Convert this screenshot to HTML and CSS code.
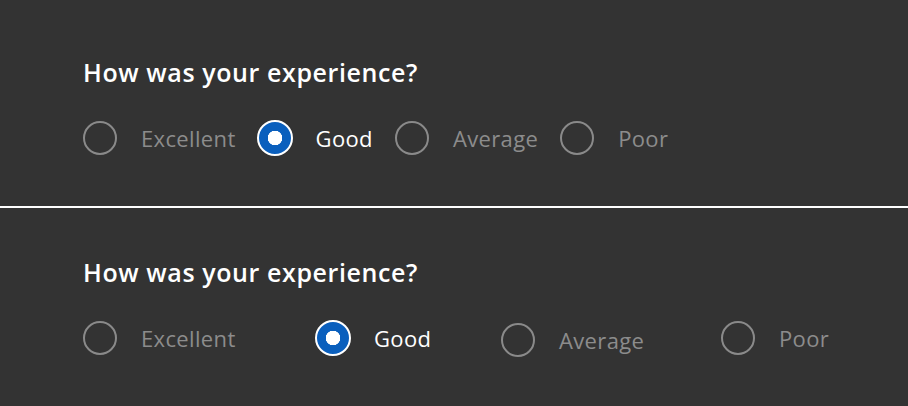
FILE: index.html
```html
<!DOCTYPE html>
<html lang="en">
<head>
<meta charset="utf-8">
<title>Experience survey</title>
<link rel="stylesheet" href="styles.css">
</head>
<body>
<section class="survey survey--top">
  <h2 class="survey__title">How was your experience?</h2>
  <div class="options options--inline" role="radiogroup">
    <label class="option"><span class="radio"></span><span class="option__label">Excellent</span></label>
    <label class="option option--checked"><span class="radio"></span><span class="option__label">Good</span></label>
    <label class="option"><span class="radio"></span><span class="option__label">Average</span></label>
    <label class="option"><span class="radio"></span><span class="option__label">Poor</span></label>
  </div>
</section>
<hr class="divider">
<section class="survey survey--bottom">
  <h2 class="survey__title">How was your experience?</h2>
  <div class="options options--spread" role="radiogroup">
    <label class="option"><span class="radio"></span><span class="option__label">Excellent</span></label>
    <label class="option option--checked"><span class="radio"></span><span class="option__label">Good</span></label>
    <label class="option option--low"><span class="radio"></span><span class="option__label">Average</span></label>
    <label class="option"><span class="radio"></span><span class="option__label">Poor</span></label>
  </div>
</section>
</body>
</html>
```
FILE: styles.css
```css
* { box-sizing: border-box; }
html, body {
  margin: 0;
  padding: 0;
  background: #333333;
  height: 100%;
}
body {
  font-family: "Open Sans", "Liberation Sans", sans-serif;
  color: #ffffff;
}
.survey {
  padding: 0 82px 0 83px;
}
.survey--top {
  height: 206px;
  padding-top: 57px;
}
.survey--bottom {
  padding-top: 49px;
}
.survey__title {
  margin: 0;
  font-size: 25px;
  font-weight: 600;
  line-height: 30px;
  letter-spacing: 0.6px;
}
.options {
  align-items: center;
  margin-top: 33px;
}
.options--inline {
  display: flex;
  gap: 22px;
}
.options--spread {
  display: grid;
  grid-template-columns: 233px 185px 220px 1fr;
}
.option {
  display: flex;
  align-items: center;
  gap: 24px;
  height: 36px;
  color: #8c8c8c;
  font-size: 22px;
  letter-spacing: 0.35px;
}
.option--low {
  position: relative;
  top: 2px;
}
.radio {
  width: 34px;
  height: 34px;
  border-radius: 50%;
  border: 2px solid #8a8a8a;
  flex: none;
}
.option--checked {
  color: #ffffff;
}
.option--checked .radio {
  width: 36px;
  height: 36px;
  margin: 0 -1px;
  border: 2px solid #ffffff;
  background: radial-gradient(circle, #ffffff 0 7px, #0a5fbd 7.5px);
}
.divider {
  margin: 0;
  border: 0;
  height: 2px;
  background: #ffffff;
}
```
